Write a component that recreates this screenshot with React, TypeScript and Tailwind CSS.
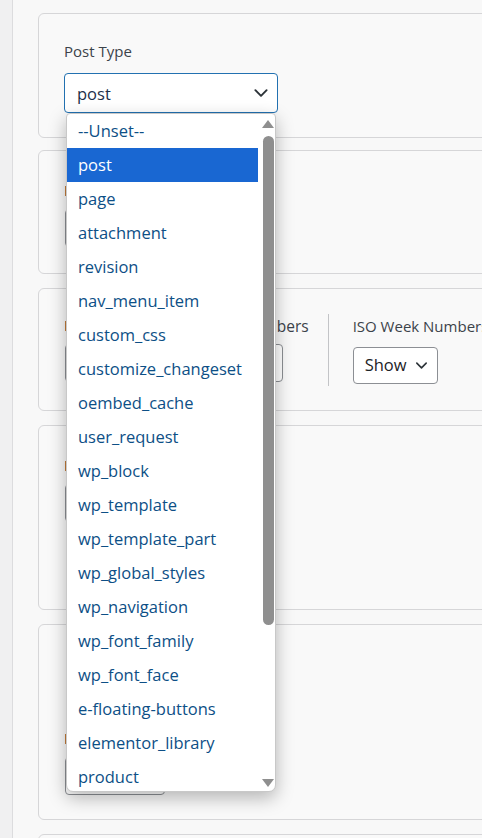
import React from 'react';

const options = [
  '--Unset--',
  'post',
  'page',
  'attachment',
  'revision',
  'nav_menu_item',
  'custom_css',
  'customize_changeset',
  'oembed_cache',
  'user_request',
  'wp_block',
  'wp_template',
  'wp_template_part',
  'wp_global_styles',
  'wp_navigation',
  'wp_font_family',
  'wp_font_face',
  'e-floating-buttons',
  'elementor_library',
  'product',
];

const Chevron = ({ className }: { className?: string }) => (
  <svg viewBox="0 0 16 16" className={className} fill="none" stroke="currentColor" strokeWidth="1.7" strokeLinecap="round" strokeLinejoin="round">
    <path d="M3 5.5l5 5 5-5" />
  </svg>
);

const Card: React.FC<{ className?: string; children?: React.ReactNode }> = ({ className, children }) => (
  <div className={`w-[520px] shrink-0 rounded-[6px] border border-[#d6d6d8] bg-[#f9f9f9] ${className || ''}`}>{children}</div>
);

// label + select, mostly hidden under the open dropdown
const FakeSelect: React.FC<{ label: string; value: string; width: string }> = ({ label, value, width }) => (
  <div className="flex flex-col gap-[8px]">
    <span className="flex items-center gap-[4px] text-[15px] leading-[20px] text-[#3c434a]">
      <span className="h-[10px] w-[3px] bg-[#c27c3a]" />
      {label}
    </span>
    <div className={`flex h-[38px] items-center justify-between rounded-[4px] border border-[#8c8f94] bg-white px-[10px] text-[16px] text-[#1d2327] ${width}`}>
      <span>{value}</span>
      <Chevron className="h-[16px] w-[16px] text-[#1d2327]" />
    </div>
  </div>
);

export default function App() {
  return (
    <div className="flex h-[838px] w-full overflow-hidden bg-[#f0f0f1]" style={{ fontFamily: '"Segoe UI", "Open Sans", "Noto Sans", sans-serif' }}>
      <div className="w-[13px] shrink-0 border-r border-[#dcdcde] bg-[#f0f0f1]" />
      <div className="flex flex-1 flex-col overflow-hidden bg-[#f8f8f8] pl-[25px] pt-[13px]">
        {/* Post type */}
        <Card className="relative z-10 h-[125px] px-[25px] pt-[27px]">
          <div className="text-[15px] leading-[20px] text-[#3c434a]">Post Type</div>
          <div className="relative mt-[12px] w-[214px]">
            <div className="flex h-[40px] items-center justify-between rounded-[4px] border-[1.5px] border-[#2271b1] bg-white pl-[12px] pr-[7px] text-[16.5px] text-[#1d2f4a]">
              <span className="mt-[2px]">post</span>
              <Chevron className="h-[18px] w-[18px] text-[#2c3338]" />
            </div>
            <div className="absolute left-[2px] top-[40px] flex h-[679px] w-[210px] overflow-hidden rounded-b-[7px] rounded-t-[4px] border border-[#c8c8c8] bg-white shadow-[0_6px_18px_rgba(0,0,0,0.28)]">
              <ul className="w-[191px] shrink-0">
                {options.map((o) => (
                  <li
                    key={o}
                    className={`flex h-[34px] items-center pl-[11px] text-[16.5px] ${
                      o === 'post' ? 'bg-[#1967d2] text-white' : 'text-[#0d4f86]'
                    }`}
                  >
                    {o}
                  </li>
                ))}
              </ul>
              <div className="flex w-[17px] flex-col items-center pt-[6px] pb-[4px] pl-[3px]">
                <div className="h-0 w-0 border-x-[6px] border-b-[8px] border-x-transparent border-b-[#8f8f8f]" />
                <div className="mt-[8px] h-[489px] w-[11px] rounded-full bg-[#8f8f8f]" />
                <div className="flex-1" />
                <div className="h-0 w-0 border-x-[6px] border-t-[8px] border-x-transparent border-t-[#8f8f8f]" />
              </div>
            </div>
          </div>
        </Card>

        <Card className="mt-[12px] h-[124px] px-[26px] pt-[30px]">
          <FakeSelect label="Format" value="Any" width="w-[200px]" />
        </Card>

        <Card className="mt-[14px] h-[123px] px-[26px] pt-[27px]">
          <div className="flex items-stretch">
            <div className="flex flex-col gap-[8px]">
              <span className="flex items-center gap-[4px] text-[15.5px] leading-[20px] text-[#3c434a]">
                <span className="h-[10px] w-[3px] bg-[#c27c3a]" />
                Display Calendar Week Numbers
              </span>
              <div className="flex h-[38px] w-[218px] items-center justify-between rounded-[4px] border border-[#8c8f94] bg-white px-[10px] text-[16px] text-[#1d2327]">
                <span>Hide</span>
                <Chevron className="h-[16px] w-[16px] text-[#1d2327]" />
              </div>
            </div>
            <div className="ml-[19px] mr-[24px] mt-[-2px] mb-[-2px] w-px bg-[#c3c4c7]" />
            <div className="flex flex-col gap-[11px]">
              <span className="whitespace-nowrap text-[15px] leading-[20px] text-[#3c434a]">ISO Week Numbers</span>
              <div className="flex h-[37px] w-[85px] items-center justify-between rounded-[4px] border border-[#8c8f94] bg-white pl-[11px] pr-[8px] text-[16.5px] text-[#1d2327]">
                <span>Show</span>
                <Chevron className="h-[15px] w-[15px] text-[#2c3338]" />
              </div>
            </div>
          </div>
        </Card>

        <Card className="mt-[14px] h-[185px] px-[26px] pt-[30px]">
          <FakeSelect label="Order" value="Date" width="w-[200px]" />
        </Card>

        <Card className="mt-[14px] h-[196px] px-[26px] pt-[104px]">
          <FakeSelect label="View" value="Month" width="w-[100px]" />
        </Card>

        <Card className="mt-[14px] h-[60px]" />
      </div>
    </div>
  );
}
